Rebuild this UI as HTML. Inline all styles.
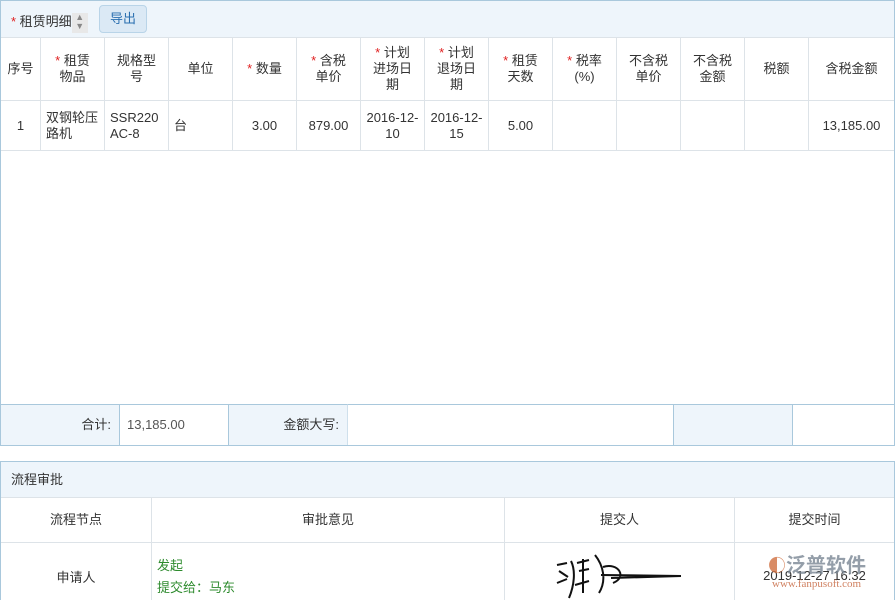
<html><head><style>
html,body{margin:0;width:895px;height:600px;overflow:hidden}
body{background:#fff;font-family:"Liberation Sans","Noto Sans CJK SC",sans-serif;font-size:13px;color:#333;position:relative}
.a{position:absolute;box-sizing:border-box}
.r{color:#e02020}
.c{display:flex;align-items:center;justify-content:center;text-align:center;line-height:16px;border-right:1px solid #dde3e8;border-bottom:1px solid #dde3e8}
.bl{background:#eef5fb}
</style></head><body>
<div class="a" style="left:0;top:0;width:895px;height:446px;border:1px solid #a9c8dc"></div>
<div class="a bl" style="left:1px;top:1px;width:893px;height:37px;border-bottom:1px solid #dde3e8"></div>
<div class="a" style="left:11px;top:11px;font-size:13px"><span class="r">*</span> 租赁明细<span style="display:inline-block;width:16px;height:20px;background:#e8e8e8;vertical-align:middle;color:#888;font-size:9px;line-height:9px;text-align:center">▲<br>▼</span></div>
<div class="a" style="left:99px;top:5px;width:48px;height:28px;border:1px solid #b9d4e8;border-radius:4px;background:#dbe9f5;color:#2a6fb0;text-align:center;line-height:26px">导出</div>
<div id="t"></div>
<div class="a bl" style="left:1px;top:404px;width:119px;height:41px;border-top:1px solid #a9c8dc;border-right:1px solid #a9c8dc;text-align:right;padding-right:8px;line-height:40px">合计:</div>
<div class="a" style="left:120px;top:404px;width:108px;height:41px;border-top:1px solid #a9c8dc;line-height:40px;padding-left:7px;color:#555">13,185.00</div>
<div class="a bl" style="left:228px;top:404px;width:120px;height:41px;border-top:1px solid #a9c8dc;border-left:1px solid #a9c8dc;border-right:1px solid #cfe0ec;text-align:right;padding-right:8px;line-height:40px">金额大写:</div>
<div class="a" style="left:348px;top:404px;width:325px;height:41px;border-top:1px solid #a9c8dc"></div>
<div class="a bl" style="left:673px;top:404px;width:120px;height:41px;border-top:1px solid #a9c8dc;border-left:1px solid #a9c8dc;border-right:1px solid #a9c8dc"></div>
<div class="a" style="left:793px;top:404px;width:101px;height:41px;border-top:1px solid #a9c8dc"></div>
<div class="a" style="left:0;top:461px;width:895px;height:150px;border:1px solid #a9c8dc"></div>
<div class="a bl" style="left:1px;top:462px;width:893px;height:36px;border-bottom:1px solid #dde3e8;line-height:36px;padding-left:10px">流程审批</div>
<div class="a c" style="left:1px;top:498px;width:151px;height:45px">流程节点</div>
<div class="a c" style="left:152px;top:498px;width:353px;height:45px">审批意见</div>
<div class="a c" style="left:505px;top:498px;width:230px;height:45px">提交人</div>
<div class="a c" style="left:735px;top:498px;width:159px;height:45px;border-right:0">提交时间</div>
<div class="a c" style="left:1px;top:543px;width:151px;height:70px">申请人</div>
<div class="a" style="left:152px;top:543px;width:353px;height:70px;border-right:1px solid #dde3e8;color:#2e8b2e;padding:12px 0 0 5px;line-height:22px">发起<br>提交给：马东</div>
<div class="a" style="left:505px;top:543px;width:230px;height:70px;border-right:1px solid #dde3e8"><svg width="230" height="60"><path d="M52 22 l10 -2 M54 28 l9 6 M52 40 l10 -4 M66 18 c5 10 3 25 -2 37 M72 20 l12 -3 M74 28 l10 -2 M78 16 v34 M70 42 l14 -4 M90 12 c8 10 12 25 4 38 M98 24 c15 -5 25 10 10 16 M96 32 l80 1 M106 35 l70 -2" stroke="#111" stroke-width="2" fill="none"/></svg></div>
<div class="a" style="left:735px;top:568px;width:159px;text-align:center">2019-12-27 16:32</div>
<div class="a" style="left:768px;top:549px;color:#7a8794;font-size:20px;font-weight:bold;opacity:.8;font-family:'Noto Sans CJK SC',sans-serif"><span style="color:#d07040;font-size:18px">◐</span>泛普软件</div>
<div class="a" style="left:772px;top:578px;color:#d08060;font-size:11px;font-family:'Liberation Serif',serif">www.fanpusoft.com</div>
<script>
var xs=[1,41,105,169,233,297,361,425,489,553,617,681,745,809,894];
var h=['序号','<span class=r>*</span> 租赁<br>物品','规格型<br>号','单位','<span class=r>*</span> 数量','<span class=r>*</span> 含税<br>单价','<span class=r>*</span> 计划<br>进场日<br>期','<span class=r>*</span> 计划<br>退场日<br>期','<span class=r>*</span> 租赁<br>天数','<span class=r>*</span> 税率<br>(%)','不含税<br>单价','不含税<br>金额','税额','含税金额'];
var d=['1','双钢轮压<br>路机','SSR220<br>AC-8','台','3.00','879.00','2016-12-<br>10','2016-12-<br>15','5.00','','','','','13,185.00'];
var s='';
for(var i=0;i<14;i++){var w=xs[i+1]-xs[i],br=i==13?'border-right:0;':'';
s+='<div class="a c" style="'+br+'left:'+xs[i]+'px;top:38px;width:'+w+'px;height:63px"><div>'+h[i]+'</div></div>';
var al=(i==1||i==2||i==3)?'justify-content:flex-start;text-align:left;padding-left:5px;':'';
s+='<div class="a c" style="'+br+al+'left:'+xs[i]+'px;top:101px;width:'+w+'px;height:50px"><div>'+d[i]+'</div></div>';}
document.getElementById('t').innerHTML=s;
</script>
</body></html>
